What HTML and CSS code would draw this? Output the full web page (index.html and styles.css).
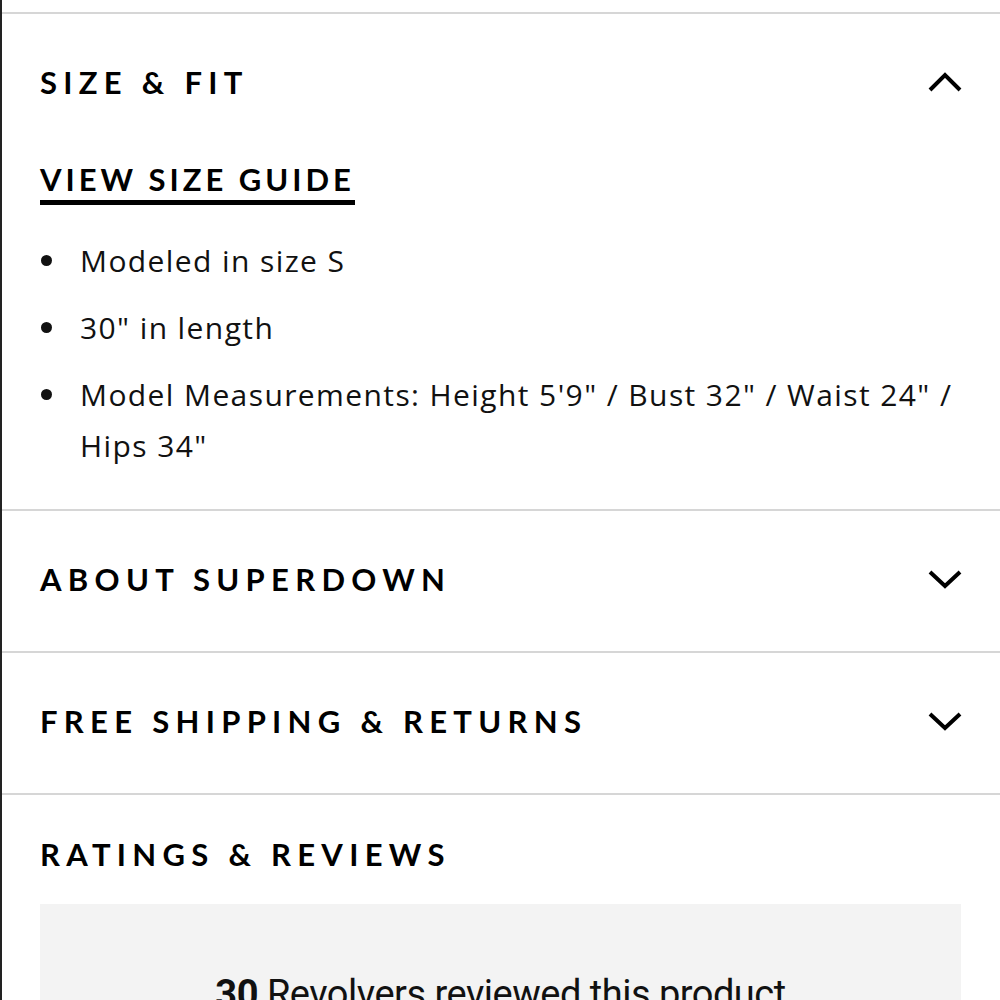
FILE: index.html
```html
<!DOCTYPE html>
<html lang="en">
<head>
    <meta charset="UTF-8">
    <meta name="viewport" content="width=device-width, initial-scale=1.0">
    <title>Product Details</title>
    <link rel="stylesheet" href="styles.css">
</head>
<body>
    <div id="details">
        <div class="section open">
            <div class="section-head">
                <h2>Size &amp; Fit</h2>
                <svg class="chevron" width="34" height="22" viewBox="0 0 34 22">
                    <polyline points="2,19 17,4 32,19" />
                </svg>
            </div>
            <div class="section-body">
                <a class="size-guide" href="#">View Size Guide</a>
                <ul class="fit-list">
                    <li>Modeled in size S</li>
                    <li>30" in length</li>
                    <li>Model Measurements: Height 5'9" / Bust 32" / Waist 24" / Hips 34"</li>
                </ul>
            </div>
        </div>

        <div class="section">
            <div class="section-head">
                <h2>About Superdown</h2>
                <svg class="chevron" width="34" height="22" viewBox="0 0 34 22">
                    <polyline points="2,4 17,18 32,4" />
                </svg>
            </div>
        </div>

        <div class="section">
            <div class="section-head">
                <h2>Free Shipping &amp; Returns</h2>
                <svg class="chevron" width="34" height="22" viewBox="0 0 34 22">
                    <polyline points="2,4 17,18 32,4" />
                </svg>
            </div>
        </div>

        <div class="section reviews">
            <h2>Ratings &amp; Reviews</h2>
            <div class="review-box">
                <p><strong>30</strong> Revolvers reviewed this product</p>
            </div>
        </div>
    </div>
</body>
</html>
```

FILE: styles.css
```css
body {
    margin: 0;
    padding: 0;
    background: #fff;
    color: #111;
    font-family: "Open Sans", sans-serif;
    overflow: hidden;
}

#details {
    height: 1000px;
    padding-top: 12px;
    border-left: 2px solid #222;
    box-sizing: border-box;
}

.section {
    border-top: 2px solid #d6d6d6;
}

h2 {
    margin: 0;
    font-family: Lato, sans-serif;
    font-weight: 700;
    font-size: 31px;
    letter-spacing: 6.3px;
    text-transform: uppercase;
    color: #000;
}

.section-head {
    height: 140px;
    padding: 0 38px 5px 38px;
    box-sizing: border-box;
    display: flex;
    align-items: center;
    justify-content: space-between;
}

.open .section-head {
    height: 136px;
    padding-bottom: 0;
}

.chevron {
    fill: none;
    stroke: #000;
    stroke-width: 4;
}

.section-body {
    padding: 10px 38px 38px 38px;
}

.size-guide {
    display: inline-block;
    line-height: 38px;
    padding-bottom: 2px;
    border-bottom: 5px solid #000;
    font-family: Lato, sans-serif;
    font-weight: 700;
    font-size: 31px;
    letter-spacing: 4px;
    text-transform: uppercase;
    text-decoration: none;
    color: #000;
}

.fit-list {
    margin: 30px 0 0 0;
    padding: 0;
    list-style: none;
    font-size: 30px;
    letter-spacing: 1.4px;
    line-height: 51px;
}

.fit-list li {
    display: flex;
    margin-bottom: 16px;
}

.fit-list li::before {
    content: "";
    flex: none;
    width: 11px;
    height: 11px;
    margin: 20px 28px 0 1px;
    border-radius: 50%;
    background: #111;
}

.fit-list li:last-child {
    margin-bottom: 0;
}

.reviews {
    padding: 37px 39px 0 38px;
}

.reviews h2 {
    line-height: 44px;
}

.review-box {
    margin-top: 28px;
    height: 200px;
    background: #f3f3f3;
    text-align: center;
}

.review-box p {
    margin: 0;
    padding-top: 70px;
    font-family: Roboto, sans-serif;
    font-size: 38px;
    line-height: 40px;
    letter-spacing: -0.5px;
}
```
